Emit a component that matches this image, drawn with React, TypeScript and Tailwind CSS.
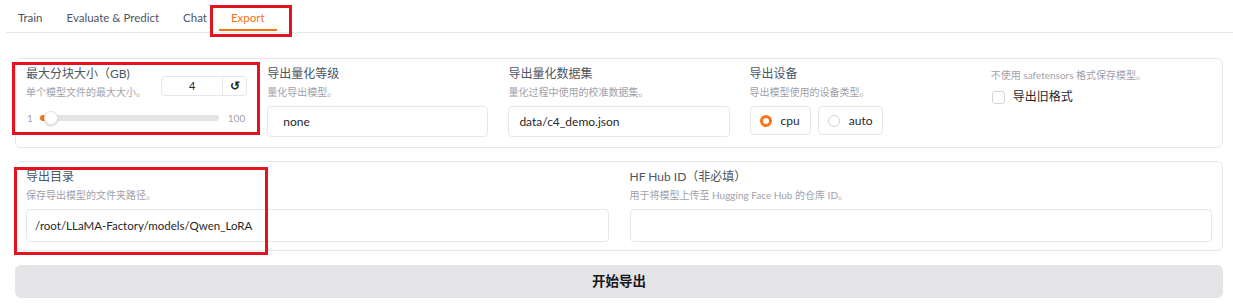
import { useState } from "react"

const font = { fontFamily: "'Lato', 'Noto Sans CJK SC', sans-serif" }

function Label({ children }: { children: React.ReactNode }) {
    return <div className="text-[12px] leading-[16px] text-[#4b5563]">{children}</div>
}

function Info({ children }: { children: React.ReactNode }) {
    return <div className="mt-[3px] text-[10px] leading-[14px] text-[#a1a1aa]">{children}</div>
}

function TextBox({ value, cls }: { value: string, cls: string }) {
    return (
        <div className={`mt-[7px] flex items-center rounded-[4px] border border-[#e5e7eb] bg-white text-[#27272a] ${cls}`}>
            {value}
        </div>
    )
}

export default function App() {
    const tabs = ["Train", "Evaluate & Predict", "Chat", "Export"]
    const [device] = useState("cpu")

    return (
        <div className="h-[308px] w-[1233px] overflow-hidden bg-white" style={font}>
            {/* tabs */}
            <div className="ml-[6px] flex h-[33px] border-b border-[#e5e7eb]">
                {tabs.map((t) => (
                    <div key={t} className="relative h-[32px] px-[12px] pt-[8px] text-[11.5px] leading-[20px]">
                        <span className={t === "Export" ? "text-[#f97316]" : "text-[#4b5563]"}>{t}</span>
                        {t === "Export" && (
                            <>
                                <div className="absolute bottom-[1px] left-0 right-0 h-[2px] bg-[#f97316]" />
                                <div className="absolute -left-[9px] -right-[15px] top-[5px] -bottom-[5px] border-[3px] border-[#e3141f]" />
                            </>
                        )}
                    </div>
                ))}
            </div>

            <div className="pl-[15px] pr-[10px]">
                {/* panel 1 */}
                <div className="mt-[25px] grid grid-cols-5 gap-x-[20px] rounded-[6px] border border-[#e5e7eb] px-[10px] pb-[10px] pt-[7px]">
                    <div className="relative">
                        <div className="flex items-start justify-between">
                            <div>
                                <Label>最大分块大小（GB)</Label>
                                <Info>单个模型文件的最大大小。</Info>
                            </div>
                            <div className="mt-[10px] flex h-[20px] w-[86px] rounded-[4px] border border-[#e5e7eb] text-[11px] text-[#27272a]">
                                <div className="flex flex-1 items-center justify-center border-r border-[#e5e7eb]">4</div>
                                <div className="flex w-[23px] items-center justify-center text-[12px] font-bold">↺</div>
                            </div>
                        </div>
                        <div className="mt-[12px] flex h-[14px] items-center text-[10px] text-[#a1a1aa]">
                            <span className="w-[14px] pl-[1px]">1</span>
                            <div className="relative h-[6px] flex-1 rounded-full bg-[#e4e4e7]">
                                <div className="absolute left-0 top-0 h-[6px] w-[10px] rounded-l-full bg-[#f97316]" />
                                <div className="absolute left-[4px] -top-[4px] h-[14px] w-[14px] rounded-full border border-[#e5e7eb] bg-white shadow-[0_1px_2px_rgba(0,0,0,0.2)]" />
                            </div>
                            <span className="ml-[9px] mr-[2px]">100</span>
                        </div>
                        <div className="absolute -left-[14px] -right-[13px] -top-[4px] h-[73px] border-[3px] border-[#e3141f]" />
                    </div>

                    <div>
                        <Label>导出量化等级</Label>
                        <Info>量化导出模型。</Info>
                        <TextBox value="none" cls="h-[31px] pl-[15px] text-[12px]" />
                    </div>

                    <div>
                        <Label>导出量化数据集</Label>
                        <Info>量化过程中使用的校准数据集。</Info>
                        <TextBox value="data/c4_demo.json" cls="h-[31px] pl-[10px] text-[12px]" />
                    </div>

                    <div>
                        <Label>导出设备</Label>
                        <Info>导出模型使用的设备类型。</Info>
                        <div className="mt-[7px] flex gap-[7px]">
                            {["cpu", "auto"].map((d) => (
                                <div key={d} className="flex h-[29px] items-center gap-[9px] rounded-[4px] border border-[#e5e7eb] pl-[9px] pr-[10px] text-[12px] text-[#27272a]">
                                    {d === device ? (
                                        <span className="h-[12px] w-[12px] rounded-full border-[3.5px] border-[#f97316] bg-white" />
                                    ) : (
                                        <span className="h-[12px] w-[12px] rounded-full border border-[#d4d4d8] bg-white" />
                                    )}
                                    {d}
                                </div>
                            ))}
                        </div>
                    </div>

                    <div>
                        <div className="mt-[2px] text-[10px] leading-[14px] text-[#a1a1aa]">不使用 safetensors 格式保存模型。</div>
                        <div className="mt-[6px] flex items-center gap-[8px] text-[12px] text-[#27272a]">
                            <span className="ml-[1px] h-[13px] w-[13px] rounded-[3px] border border-[#d4d4d8] bg-white" />
                            导出旧格式
                        </div>
                    </div>
                </div>

                {/* panel 2 */}
                <div className="mt-[13px] grid grid-cols-2 gap-x-[21px] rounded-[6px] border border-[#e5e7eb] px-[10px] pb-[8px] pt-[7px]">
                    <div className="relative">
                        <Label>导出目录</Label>
                        <Info>保存导出模型的文件夹路径。</Info>
                        <TextBox value="/root/LLaMA-Factory/models/Qwen_LoRA" cls="h-[33px] pl-[8px] text-[11.5px]" />
                        <div className="absolute -left-[12px] -top-[2px] h-[88px] w-[254px] border-[3px] border-[#e3141f]" />
                    </div>
                    <div>
                        <Label>HF Hub ID（非必填）</Label>
                        <Info>用于将模型上传至 Hugging Face Hub 的仓库 ID。</Info>
                        <TextBox value="" cls="h-[33px]" />
                    </div>
                </div>

                <button className="mt-[14px] flex h-[33px] w-full items-center justify-center rounded-[6px] bg-[#e4e4e7] text-[13.5px] font-bold text-[#18181b]">
                    开始导出
                </button>
            </div>
        </div>
    )
}
